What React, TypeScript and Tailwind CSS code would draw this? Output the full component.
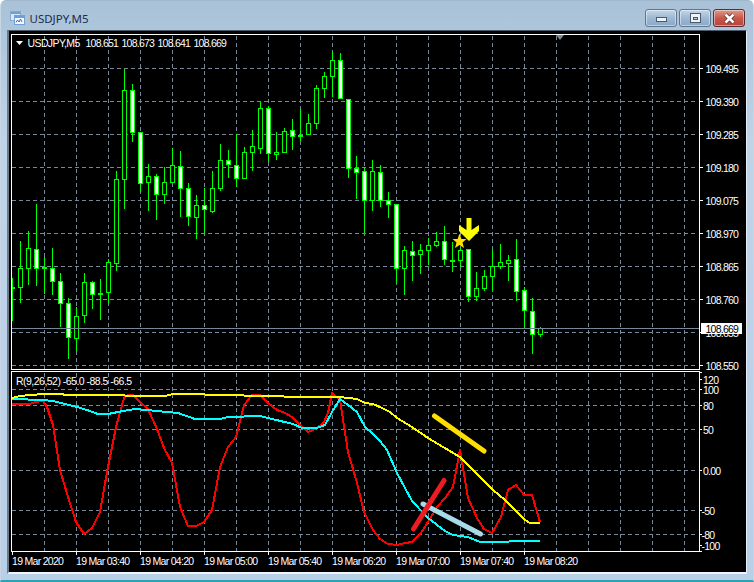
import React from "react";

type C = [number, number, number, number, number, number];
// x, high, bodyTop, bodyBottom, low, bear(white)
const candles: C[] = [
  [12, 278, 287, 287, 321, 0],[20, 241, 268, 287, 303, 0],[28, 231, 248, 268, 285, 0],[36, 204, 249, 268, 286, 1],
  [44, 257, 267, 268, 294, 1],[52, 248, 268, 281, 295, 1],[60, 273, 281, 303, 327, 1],[68, 298, 303, 337, 359, 1],
  [76, 307, 316, 338, 351, 0],[84, 273, 282, 315, 323, 0],[92, 281, 282, 294, 309, 1],[100, 279, 293, 294, 320, 1],
  [108, 259, 262, 292, 303, 0],[116, 171, 179, 263, 271, 0],[124, 69, 90, 179, 209, 0],[132, 84, 90, 132, 142, 1],
  [140, 132, 132, 183, 192, 1],[148, 164, 176, 182, 211, 0],[156, 174, 176, 194, 220, 1],[164, 167, 182, 194, 204, 0],
  [172, 148, 165, 182, 182, 0],[180, 151, 166, 188, 217, 1],[188, 183, 188, 216, 226, 1],[196, 195, 205, 217, 239, 0],
  [204, 188, 205, 209, 234, 1],[212, 171, 188, 211, 213, 0],[220, 144, 160, 188, 191, 0],[228, 150, 160, 164, 178, 1],
  [236, 134, 165, 178, 187, 1],[244, 147, 152, 178, 178, 0],[252, 130, 146, 152, 171, 0],[260, 102, 108, 148, 154, 0],
  [268, 106, 108, 153, 162, 1],[276, 132, 152, 154, 160, 0],[284, 128, 131, 152, 152, 0],[292, 119, 130, 136, 150, 1],
  [300, 109, 135, 135, 141, 1],[308, 114, 123, 134, 134, 0],[316, 85, 88, 123, 129, 0],[324, 72, 76, 88, 98, 0],
  [332, 51, 60, 76, 97, 0],[340, 53, 60, 98, 99, 1],[348, 99, 99, 168, 178, 1],[356, 156, 168, 172, 199, 1],
  [364, 167, 171, 200, 233, 1],[372, 160, 171, 200, 211, 0],[380, 165, 172, 200, 207, 1],[388, 192, 200, 204, 218, 1],
  [396, 204, 204, 268, 283, 1],[404, 246, 250, 268, 295, 0],[412, 241, 251, 255, 281, 1],[420, 244, 250, 254, 274, 0],
  [428, 238, 245, 250, 265, 0],[436, 232, 241, 245, 247, 0],[444, 226, 241, 259, 265, 1],[452, 242, 260, 260, 272, 1],
  [460, 247, 250, 260, 267, 0],[468, 249, 249, 296, 302, 1],[476, 272, 288, 296, 301, 0],[484, 270, 276, 288, 291, 0],
  [492, 250, 266, 276, 291, 0],[500, 244, 262, 266, 269, 0],[508, 255, 260, 263, 281, 0],[516, 239, 259, 291, 301, 1],
  [524, 287, 290, 310, 328, 1],[532, 298, 311, 334, 354, 1],[540, 327, 328, 334, 337, 0],
];

const vGrid = [44, 76, 108, 140, 172, 204, 236, 268, 300, 332, 364, 396, 428, 460, 492, 524, 556, 588, 620, 652, 684];
const prices: [string, number][] = [
  ["109.495", 68], ["109.390", 101], ["109.285", 134], ["109.180", 167], ["109.075", 200],
  ["108.970", 233], ["108.865", 266], ["108.760", 299], ["108.655", 332], ["108.550", 365],
];
const levels: [string, number, boolean][] = [
  ["120", 379, false], ["100", 389, true], ["80", 405, true], ["50", 429, true],
  ["0.00", 470, true], ["-50", 510, true], ["-80", 534, true], ["-100", 545, false],
];
const times: [string, number][] = [
  ["19 Mar 2020", 12], ["19 Mar 03:40", 76], ["19 Mar 04:20", 140], ["19 Mar 05:00", 204], ["19 Mar 05:40", 268],
  ["19 Mar 06:20", 332], ["19 Mar 07:00", 396], ["19 Mar 07:40", 460], ["19 Mar 08:20", 524],
];

const red = "12,404 30,404 35,402 43,401 47,407 53,425 60,470 68,497 76,522 84,534 92,528 100,512 107,472 116,427 124,398 128,395 133,395 140,402 148,409 157,429 164,448 172,463 180,507 188,526 196,526 204,522 212,510 220,467 228,447 236,437 244,405 252,395 260,395 268,403 277,410 285,413 292,417 300,425 308,432 317,428 324,422 328,413 332,393 340,400 348,452 357,483 364,512 373,530 380,539 388,544 397,545 405,543 412,542 421,533 428,522 437,507 445,498 453,487 460,450 468,498 477,518 484,529 492,533 501,517 508,490 516,485 524,495 532,495 540,522";
const yellow = "12,398 20,396 30,395 45,394 60,394 67,395 84,395 165,396 173,394 203,394 207,395 243,395 245,396 283,396 285,397 340,397 357,399 365,403 373,404 382,408 390,412 397,418 412,427 428,438 443,447 460,457 493,490 505,500 525,520 530,523 540,523";
const cyan = "12,399 43,400 53,401 77,407 87,410 98,414 108,414 123,411 135,409 157,411 178,413 195,419 220,419 228,417 260,416 268,418 293,424 302,428 317,428 325,425 332,412 340,399 348,405 357,412 365,427 373,434 380,441 387,450 397,473 412,501 428,518 445,531 453,535 468,537 480,542 508,542 510,541 540,541";

const font = { fontFamily: "'Liberation Sans', Arial, sans-serif" };

function Grid({ ys, y1, y2 }: { ys: number[]; y1: number; y2: number }) {
  return (
    <g stroke="#778899" strokeWidth="1" strokeDasharray="4 3" shapeRendering="crispEdges">
      {ys.map((y) => (
        <line key={y} x1="12" x2="698" y1={y + 0.5} y2={y + 0.5} />
      ))}
      {vGrid.map((x) => (
        <line key={x} x1={x + 0.5} x2={x + 0.5} y1={y1} y2={y2} />
      ))}
    </g>
  );
}

function Candles() {
  return (
    <g shapeRendering="crispEdges" clipPath="url(#plot-area)">
      {candles.map(([x, h, t, b, l, bear]) => (
        <g key={x}>
          <rect x={x} y={h} width="1" height={l - h} fill="#00ff00" />
          {b - t < 1 ? (
            <rect x={x - 2} y={t} width="5" height="2" fill="#00ff00" />
          ) : (
            <>
              <rect x={x - 2} y={t} width="5" height={b - t + 1} fill="#00ff00" />
              <rect x={x - 1} y={t + 1} width="3" height={b - t - 1} fill={bear ? "#ffffff" : "#000000"} />
            </>
          )}
        </g>
      ))}
    </g>
  );
}

function MainPane() {
  return (
    <svg width="737" height="339" viewBox="9 31 737 339" className="block shrink-0">
      <defs>
        <clipPath id="plot-area">
          <rect x="12" y="35" width="687" height="334" />
        </clipPath>
      </defs>
      <Grid ys={prices.map((p) => p[1])} y1={36} y2={369} />
      <polygon points="556,35 564,35 560,40" fill="#778899" />
      <Candles />
      <rect x="12" y="328" width="687" height="1" fill="#778899" shapeRendering="crispEdges" />
      <polygon points="466.5,218 471.5,218 471.5,230 479,225 479,231 469,241 459,231 459,225 466.5,230" fill="#ffff00" />
      <polygon points="459.5,233.5 461.4,238.9 466.5,238.9 462.5,242.6 464,248 459.5,245 455,248 456.5,242.6 452.5,238.9 457.6,238.9" fill="#ffe000" />
      <path d="M11.5 370V34.5H699.5V370" fill="none" stroke="#ffffff" shapeRendering="crispEdges" />
      <rect x="11" y="369" width="689" height="1" fill="#ffffff" shapeRendering="crispEdges" />
      {prices.map(([, y]) => (
        <rect key={y} x="700" y={y} width="3" height="1" fill="#ffffff" shapeRendering="crispEdges" />
      ))}
      <g fill="#ffffff" fontSize="10.5" letterSpacing="-0.75" style={font}>
        {prices.map(([p, y]) => (
          <text key={p} x="705.5" y={y + 4.5}>{p}</text>
        ))}
        <polygon points="16,41 23,41 19.5,45" />
        <text x="27.5" y="46.5" letterSpacing="-0.6">USDJPY,M5</text>
        <text x="85.5" y="46.5">108.651</text>
        <text x="121.5" y="46.5">108.673</text>
        <text x="157.5" y="46.5">108.641</text>
        <text x="193.5" y="46.5">108.669</text>
      </g>
      <rect x="701" y="323" width="41" height="11" fill="#ffffff" shapeRendering="crispEdges" />
      <text x="705.5" y="332.5" fill="#000000" fontSize="10.5" letterSpacing="-0.75" style={font}>108.669</text>
    </svg>
  );
}

function IndicatorPane() {
  return (
    <svg width="737" height="202" viewBox="9 370 737 202" className="block shrink-0">
      <Grid ys={levels.filter((l) => l[2]).map((l) => l[1])} y1={373} y2={551} />
      <g fill="none" strokeWidth="2" strokeLinejoin="round" shapeRendering="crispEdges">
        <polyline points={red} stroke="#ff0000" />
        <polyline points={cyan} stroke="#00ffff" />
        <polyline points={yellow} stroke="#ffff00" />
      </g>
      <g strokeLinecap="round" strokeWidth="5">
        <line x1="434.5" y1="416" x2="484" y2="451" stroke="#ffdd00" />
        <line x1="423" y1="504" x2="480.5" y2="534" stroke="#a8dbe8" />
        <line x1="413.5" y1="529" x2="444" y2="480.5" stroke="#ed1c24" />
      </g>
      <path d="M11.5 371.5H699.5V551.5H11.5Z" fill="none" stroke="#ffffff" shapeRendering="crispEdges" />
      <g fill="#ffffff" shapeRendering="crispEdges">
        {levels.map(([t, y]) => (
          <rect key={t} x="700" y={y} width="2" height="1" />
        ))}
        <rect x="700" y="372" width="2" height="1" />
        <rect x="700" y="551" width="2" height="1" />
        {times.map(([t, x]) => (
          <rect key={t} x={x} y="552" width="1" height="3" />
        ))}
      </g>
      <g fill="#ffffff" fontSize="10.5" letterSpacing="-0.75" style={font}>
        <text x="16" y="384.5" letterSpacing="-0.52">R(9,26,52) -65.0 -88.5 -66.5</text>
        {levels.map(([t, y]) => (
          <text key={t} x={t.startsWith("-") ? 701.5 : 703} y={y + 4.5}>{t}</text>
        ))}
        {times.map(([t, x]) => (
          <text key={t} x={x} y="564.5" letterSpacing="-0.7">{t}</text>
        ))}
      </g>
    </svg>
  );
}

function AppIcon() {
  return (
    <svg width="15" height="14" viewBox="0 0 15 14" className="shrink-0">
      <rect x="0.5" y="0.5" width="10" height="9" fill="#dbe8f6" stroke="#86a9d4" />
      <rect x="1" y="1" width="9" height="2" fill="#6f9edb" />
      <rect x="4.5" y="4.5" width="10" height="9" fill="#f4f8fd" stroke="#7a9ecb" />
      <rect x="5" y="5" width="9" height="2" fill="#6f9edb" />
      <path d="M6 11.5l1.5-2.5 1.5 2 1.5-3 1.5 3" fill="none" stroke="#3e6fb0" />
    </svg>
  );
}

function WinButton({ kind }: { kind: "min" | "max" | "close" }) {
  const cls =
    kind === "close"
      ? "border-[#5f2a33] bg-gradient-to-b from-[#dd9a8e] via-[#c8584a] to-[#b6443a]"
      : "border-[#60768f] bg-gradient-to-b from-[#c5d6e7] via-[#9db8d3] to-[#8aa8c8]";
  return (
    <div className={`flex h-[18px] w-[32px] items-center justify-center rounded-[3px] border shadow-[inset_0_0_0_1px_rgba(255,255,255,0.45)] ${cls}`}>
      {kind === "min" && <div className="mt-[3px] h-[5px] w-[11px] border border-[#4a5a6b] bg-[#eef3f8]" />}
      {kind === "max" && (
        <div className="flex h-[10px] w-[11px] items-center justify-center border border-[#4a5a6b] bg-[#eef3f8]">
          <div className="h-[3px] w-[5px] border border-[#4a5a6b] bg-[#b7c9db]" />
        </div>
      )}
      {kind === "close" && (
        <svg width="13" height="11" viewBox="0 0 13 11">
          <path d="M2.5 1.5L10.5 9.5M10.5 1.5L2.5 9.5" stroke="#4d2a2a" strokeWidth="4" />
          <path d="M2.5 1.5L10.5 9.5M10.5 1.5L2.5 9.5" stroke="#ffffff" strokeWidth="2.6" />
        </svg>
      )}
    </div>
  );
}

export default function App() {
  return (
    <div className="h-[582px] w-[754px] overflow-hidden bg-white">
      <div className="flex h-[582px] w-[754px] flex-col rounded-t-[6px] border border-[#c6d6e6] border-b-2 border-b-[#2aa3b5] border-t-[#9fb8cc] bg-gradient-to-b from-[#a9c2d8] via-[#c0d4e8] via-[25%] to-[#b8cfe8] px-[6px]">
        <div className="flex h-[29px] shrink-0 items-start pl-[3px] pt-[8px]">
          <div className="mt-[2px]"><AppIcon /></div>
          <span className="ml-[4.5px] mt-[2px] text-[11.5px] leading-[16px] text-[#1d2b4a]" style={{ fontFamily: "'Noto Sans', 'Open Sans', sans-serif" }}>USDJPY,M5</span>
          <div className="ml-auto mr-[2px] flex gap-[2px]">
            <WinButton kind="min" />
            <WinButton kind="max" />
            <WinButton kind="close" />
          </div>
        </div>
        <div className="flex w-[740px] flex-col border-b-2 border-l-2 border-r border-t border-b-[#eef4fa] border-l-[#6c7a88] border-r-[#e6eef7] border-t-[#4c5a68] bg-black">
          <MainPane />
          <IndicatorPane />
        </div>
      </div>
    </div>
  );
}
